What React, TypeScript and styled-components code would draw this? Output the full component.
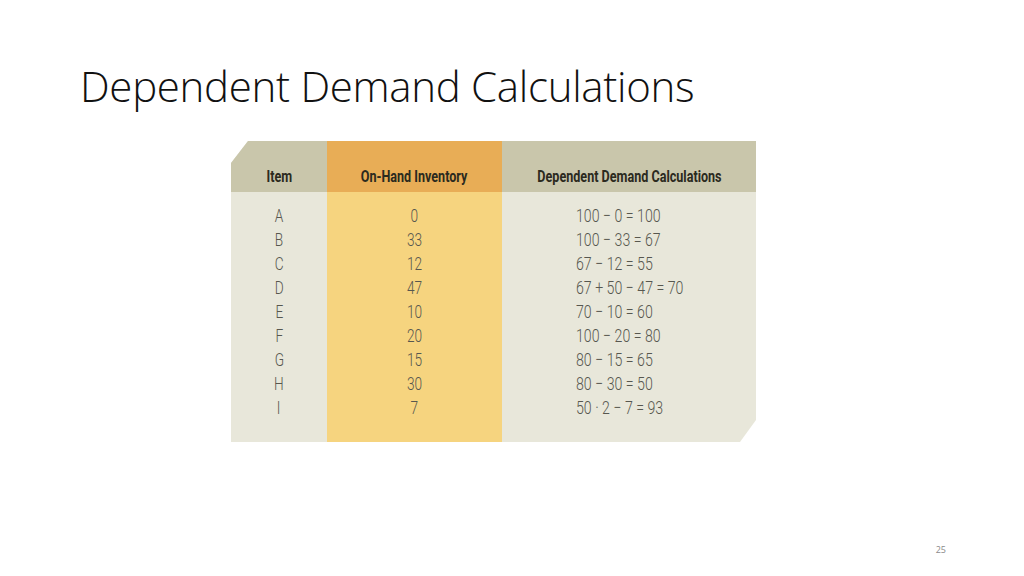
import styled, { createGlobalStyle } from "styled-components";

const Global = createGlobalStyle`
  html, body {
    margin: 0;
    padding: 0;
    background: #fff;
  }
  body {
    width: 1024px;
    height: 576px;
    overflow: hidden;
  }
`;

const Slide = styled.div`
  position: relative;
  width: 1024px;
  height: 576px;
  background: #fff;
  display: flex;
  flex-direction: column;
`;

const Title = styled.h1`
  margin: 0;
  padding: 55px 0 0 80px;
  font-family: "Open Sans", "Liberation Sans", sans-serif;
  font-weight: 300;
  font-size: 42px;
  line-height: 62px;
  color: #111;
  letter-spacing: -0.3px;
`;

const Table = styled.div`
  margin: 24px 0 0 231px;
  width: 525px;
  height: 301px;
  display: grid;
  grid-template-columns: 96px 175px 254px;
  clip-path: polygon(17px 0, 100% 0, 100% 279px, 509px 100%, 0 100%, 0 22px);
`;

const Column = styled.div<{ $hot?: boolean }>`
  display: flex;
  flex-direction: column;
  background: ${(p) => (p.$hot ? "#f6d47f" : "#e8e7da")};
`;

const Head = styled.div<{ $hot?: boolean }>`
  height: 51px;
  display: flex;
  align-items: center;
  justify-content: center;
  background: ${(p) => (p.$hot ? "#e8ad56" : "#c9c6ab")};
  font-family: Roboto, "Liberation Sans", sans-serif;
  font-weight: 700;
  font-size: 17px;
  color: #2b2a1e;
  padding-top: 19px;
  box-sizing: border-box;
  white-space: nowrap;
`;

const Body = styled.div<{ $left?: boolean }>`
  display: flex;
  flex-direction: column;
  align-items: ${(p) => (p.$left ? "flex-start" : "center")};
  padding: 12px 0 0 ${(p) => (p.$left ? "74px" : "0")};
`;

const Cell = styled.div`
  height: 24px;
  line-height: 24px;
  font-family: Roboto, "Liberation Sans", sans-serif;
  font-weight: 300;
  font-size: 19px;
  color: #57574f;
  white-space: pre;
`;

const Narrow = styled.span<{ $x: number; $left?: boolean }>`
  display: inline-block;
  transform: scaleX(${(p) => p.$x});
  transform-origin: ${(p) => (p.$left ? "left" : "center")} center;
`;

const PageNum = styled.div`
  position: absolute;
  right: 78px;
  bottom: 20px;
  font-family: "Open Sans", "Liberation Sans", sans-serif;
  font-size: 9px;
  color: #8a8a8a;
`;

const items = ["A", "B", "C", "D", "E", "F", "G", "H", "I"];
const onHand = ["0", "33", "12", "47", "10", "20", "15", "30", "7"];
const calcs = [
  "100 − 0 = 100",
  "100 − 33 = 67",
  "67 − 12 = 55",
  "67 + 50 − 47 = 70",
  "70 − 10 = 60",
  "100 − 20 = 80",
  "80 − 15 = 65",
  "80 − 30 = 50",
  "50 · 2 − 7 = 93",
];

export default function App() {
  return (
    <Slide>
      <Global />
      <Title>Dependent Demand Calculations</Title>
      <Table>
        <Column>
          <Head>
            <Narrow $x={0.74}>Item</Narrow>
          </Head>
          <Body>
            {items.map((v) => (
              <Cell key={v}>
                <Narrow $x={0.72}>{v}</Narrow>
              </Cell>
            ))}
          </Body>
        </Column>
        <Column $hot>
          <Head $hot>
            <Narrow $x={0.74}>On-Hand Inventory</Narrow>
          </Head>
          <Body>
            {onHand.map((v, i) => (
              <Cell key={i}>
                <Narrow $x={0.72}>{v}</Narrow>
              </Cell>
            ))}
          </Body>
        </Column>
        <Column>
          <Head>
            <Narrow $x={0.74}>Dependent Demand Calculations</Narrow>
          </Head>
          <Body $left>
            {calcs.map((v, i) => (
              <Cell key={i}>
                <Narrow $x={0.745} $left>
                  {v}
                </Narrow>
              </Cell>
            ))}
          </Body>
        </Column>
      </Table>
      <PageNum>25</PageNum>
    </Slide>
  );
}
